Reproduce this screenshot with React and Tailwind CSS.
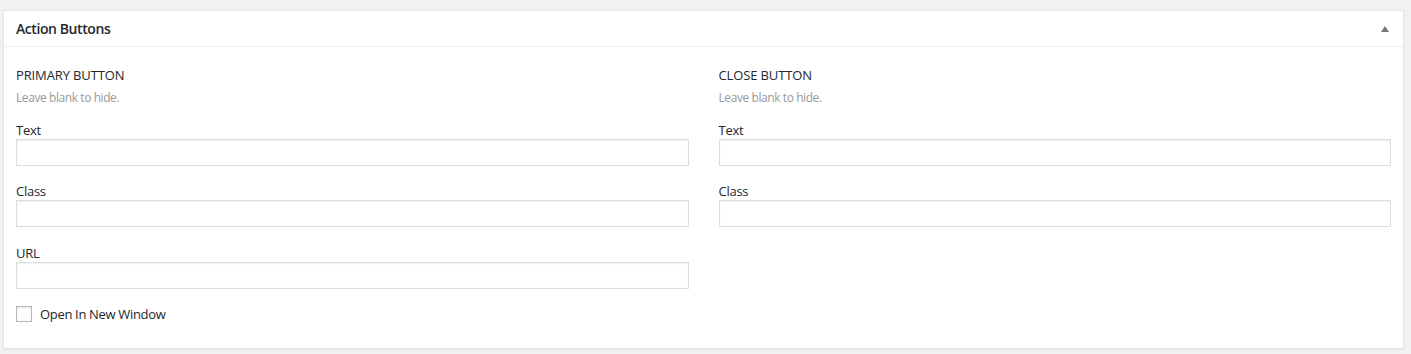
import React from "react";

function Field({ label, top }) {
  return (
    <div className={top}>
      <label className="block text-[13px] leading-[18px] tracking-[-0.02em] text-[#23282d]">{label}</label>
      <input
        type="text"
        className="block w-full h-[27px] bg-white border border-[#dddddd] shadow-[inset_0_1px_2px_rgba(0,0,0,0.07)] outline-none"
      />
    </div>
  );
}

function Column({ title, children }) {
  return (
    <div>
      <h4 className="text-[13px] leading-[18px] uppercase tracking-[-0.01em] text-[#23282d]">{title}</h4>
      <p className="mt-[6px] text-[12px] leading-[16px] tracking-[-0.035em] text-[#999999]">Leave blank to hide.</p>
      {children}
    </div>
  );
}

export default function App() {
  return (
    <div
      className="min-h-[354px] bg-[#f1f1f1] pt-[10px] pl-[3px] pr-[7px]"
      style={{ fontFamily: '"Open Sans", "Noto Sans", Arial, sans-serif' }}
    >
      <div className="bg-white border border-[#e5e5e5] shadow-[0_1px_1px_rgba(0,0,0,0.04)]">
        {/* Header */}
        <div className="h-[36px] flex items-center justify-between pl-[12px] pr-[14px] border-b border-[#eeeeee]">
          <h2 className="text-[14px] font-semibold tracking-[-0.03em] text-[#23282d]">Action Buttons</h2>
          <svg width="8" height="6" viewBox="0 0 8 6" className="mt-[1px]">
            <path d="M4 0 L8 6 L0 6 Z" fill="#72777c" />
          </svg>
        </div>

        {/* Body */}
        <div className="grid grid-cols-2 gap-[30px] px-[12px] pt-[19px] pb-[25px]">
          <Column title="Primary Button">
            <Field label="Text" top="mt-[15px]" />
            <Field label="Class" top="mt-[16px]" />
            <Field label="URL" top="mt-[17px]" />
            <label className="mt-[16px] flex items-center gap-[8px]">
              <span className="w-[16px] h-[16px] border border-[#b4b9be] bg-white shadow-[inset_0_1px_2px_rgba(0,0,0,0.1)]" />
              <span className="text-[13px] leading-[18px] tracking-[-0.025em] text-[#23282d]">Open In New Window</span>
            </label>
          </Column>
          <Column title="Close Button">
            <Field label="Text" top="mt-[15px]" />
            <Field label="Class" top="mt-[16px]" />
          </Column>
        </div>
      </div>
    </div>
  );
}
